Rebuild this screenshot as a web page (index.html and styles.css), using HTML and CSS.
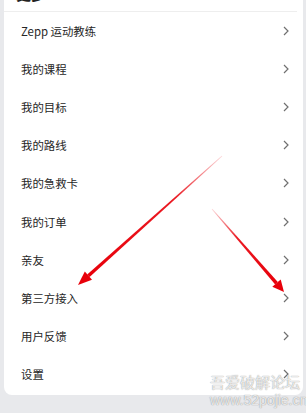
FILE: index.html
```html
<!DOCTYPE html>
<html lang="zh">
<head>
<meta charset="utf-8">
<link rel="stylesheet" href="styles.css">
</head>
<body>
<div class="page">
  <div class="card">
    <div class="heading">更多</div>
    <ul class="list">
      <li class="row"><span>Zepp 运动教练</span><svg class="chev" viewBox="0 0 6 10"><path d="M1 1 L5 5 L1 9"/></svg></li>
      <li class="row"><span>我的课程</span><svg class="chev" viewBox="0 0 6 10"><path d="M1 1 L5 5 L1 9"/></svg></li>
      <li class="row"><span>我的目标</span><svg class="chev" viewBox="0 0 6 10"><path d="M1 1 L5 5 L1 9"/></svg></li>
      <li class="row"><span>我的路线</span><svg class="chev" viewBox="0 0 6 10"><path d="M1 1 L5 5 L1 9"/></svg></li>
      <li class="row"><span>我的急救卡</span><svg class="chev" viewBox="0 0 6 10"><path d="M1 1 L5 5 L1 9"/></svg></li>
      <li class="row"><span>我的订单</span><svg class="chev" viewBox="0 0 6 10"><path d="M1 1 L5 5 L1 9"/></svg></li>
      <li class="row"><span>亲友</span><svg class="chev" viewBox="0 0 6 10"><path d="M1 1 L5 5 L1 9"/></svg></li>
      <li class="row"><span>第三方接入</span><svg class="chev" viewBox="0 0 6 10"><path d="M1 1 L5 5 L1 9"/></svg></li>
      <li class="row"><span>用户反馈</span><svg class="chev" viewBox="0 0 6 10"><path d="M1 1 L5 5 L1 9"/></svg></li>
      <li class="row"><span>设置</span><svg class="chev" viewBox="0 0 6 10"><path d="M1 1 L5 5 L1 9"/></svg></li>
    </ul>
  </div>
  <svg class="arrows" viewBox="0 0 306 413" width="306" height="413">
    <defs>
      <linearGradient id="g1" gradientUnits="userSpaceOnUse" x1="222" y1="156" x2="88" y2="276">
        <stop offset="0" stop-color="#e8000a" stop-opacity="0.15"/>
        <stop offset="0.35" stop-color="#e8000a" stop-opacity="0.9"/>
        <stop offset="1" stop-color="#e8000a"/>
      </linearGradient>
      <linearGradient id="g2" gradientUnits="userSpaceOnUse" x1="212" y1="209" x2="276" y2="283">
        <stop offset="0" stop-color="#e8000a" stop-opacity="0.15"/>
        <stop offset="0.4" stop-color="#e8000a" stop-opacity="0.9"/>
        <stop offset="1" stop-color="#e8000a"/>
      </linearGradient>
    </defs>
    <polygon fill="url(#g1)" points="222.3,156.3 221.7,155.7 87.2,274.4 89.6,277.0"/>
    <polygon fill="#e8000a" points="78,285 84.8,271.6 92.0,279.8"/>
    <polygon fill="url(#g2)" points="211.7,209.3 212.3,208.7 277.8,282.0 275.2,284.4"/>
    <polygon fill="#e8000a" points="284,292 272.3,286.8 280.7,279.6"/>
  </svg>
  <div class="watermark">
    <div class="wm1">吾爱破解论坛</div>
    <div class="wm2">www.52pojie.cn</div>
  </div>
</div>
</body>
</html>
```
FILE: styles.css
```css
html, body {
  margin: 0;
  padding: 0;
}
body {
  background: #e8e9ec;
  font-family: "Noto Sans CJK SC", "Noto Sans", sans-serif;
  overflow: hidden;
}
.page {
  position: relative;
  width: 306px;
  height: 413px;
  overflow: hidden;
}
.card {
  margin: -28px 3px 0 4px;
  background: #fff;
  border-radius: 8px;
  padding-bottom: 2px;
}
.heading {
  height: 40px;
  box-sizing: border-box;
  display: flex;
  align-items: flex-end;
  padding: 0 0 10px 12px;
  font-size: 15px;
  font-weight: bold;
  line-height: 1;
  color: #222;
  border-bottom: 1px solid #eeeeee;
  margin-right: 6px;
}
.list {
  list-style: none;
  margin: 0;
  padding: 0;
}
.row {
  height: 38.1px;
  display: flex;
  align-items: center;
  justify-content: space-between;
  padding: 0 14px 0 17px;
  font-size: 11.4px;
  color: #262626;
}
.chev {
  width: 6px;
  height: 10px;
  fill: none;
  stroke: #707070;
  stroke-width: 1.2;
}
.arrows {
  position: absolute;
  left: 0;
  top: 0;
  pointer-events: none;
}
.watermark {
  position: absolute;
  left: 210px;
  top: 374px;
  color: rgba(255, 255, 255, 0.8);
  text-shadow: 0 0 1px rgba(90, 90, 90, 0.45), 0 0 1px rgba(90, 90, 90, 0.45);
  line-height: 1;
}
.wm1 {
  font-size: 15px;
}
.wm2 {
  font-family: "Liberation Sans", sans-serif;
  font-size: 14px;
  margin-top: 4px;
}
```
